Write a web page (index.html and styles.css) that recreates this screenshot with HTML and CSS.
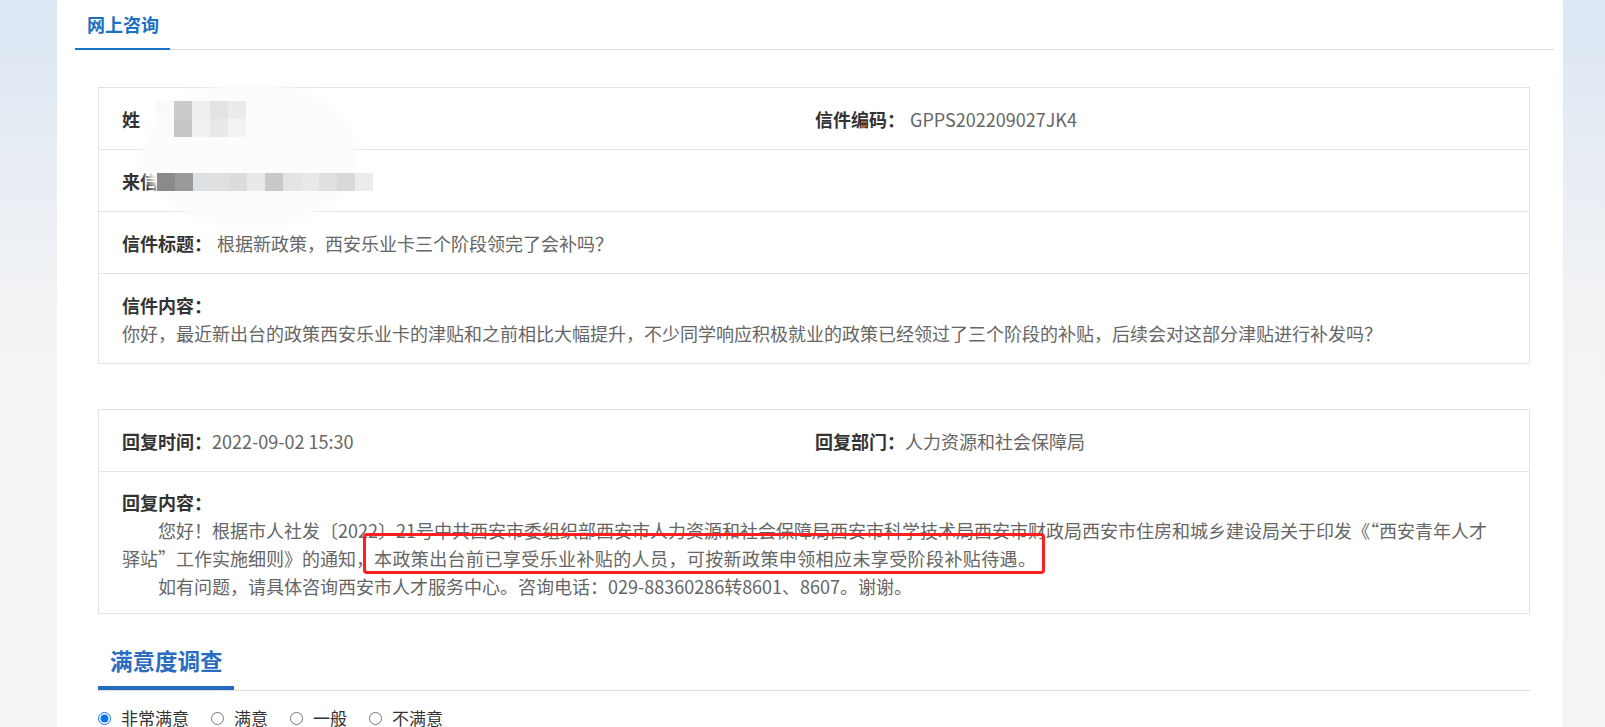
FILE: index.html
```html
<!DOCTYPE html>
<html lang="zh-CN">
<head>
    <meta charset="UTF-8">
    <title>网上咨询</title>
    <link rel="stylesheet" href="styles.css">
</head>
<body>
    <div class="page">
        <div class="tabs">
            <div class="tab">网上咨询</div>
        </div>

        <!-- 来信信息 -->
        <div class="panel letter">
            <div class="row">
                <div><span class="label">姓</span></div>
                <div><span class="label">信件编码：</span><span class="value gap">GPPS202209027JK4</span></div>
            </div>
            <div class="row">
                <div><span class="label">来信</span></div>
            </div>
            <div class="row">
                <div class="wide"><span class="label">信件标题：</span><span class="value gap">根据新政策，西安乐业卡三个阶段领完了会补吗？</span></div>
            </div>
            <div class="row tall">
                <div class="wide">
                    <div class="label">信件内容：</div>
                    <p class="value">你好，最近新出台的政策西安乐业卡的津贴和之前相比大幅提升，不少同学响应积极就业的政策已经领过了三个阶段的补贴，后续会对这部分津贴进行补发吗？</p>
                </div>
            </div>

            <!-- 打码区域 -->
            <div class="blur"></div>
            <div class="mosaic m1">
                <i class="c1"></i><i class="c2"></i><i class="c3"></i><i class="c4"></i><i class="c5"></i>
                <i class="c1b"></i><i class="c2b"></i><i class="c3b"></i><i class="c4b"></i><i class="c5b"></i>
            </div>
            <div class="mosaic m2">
                <i class="d0"></i><i class="d1"></i><i class="d2"></i><i class="d3"></i><i class="d4"></i><i class="d5"></i>
                <i class="d6"></i><i class="d7"></i><i class="d8"></i><i class="d9"></i><i class="d10"></i><i class="d11"></i>
            </div>
        </div>

        <!-- 回复信息 -->
        <div class="panel reply">
            <div class="row">
                <div><span class="label">回复时间：</span><span class="value">2022-09-02 15:30</span></div>
                <div><span class="label">回复部门：</span><span class="value">人力资源和社会保障局</span></div>
            </div>
            <div class="row tall last">
                <div class="wide">
                    <div class="label">回复内容：</div>
                    <p class="value indent">您好！根据市人社发〔2022〕21号中共西安市委组织部西安市人力资源和社会保障局西安市科学技术局西安市财政局西安市住房和城乡建设局关于印发《“西安青年人才<br>驿站”工作实施细则》的通知，<span class="mark">本政策出台前已享受乐业补贴的人员，可按新政策申领相应未享受阶段补贴待遇。</span></p>
                    <p class="value indent">如有问题，请具体咨询西安市人才服务中心。咨询电话：029-88360286转8601、8607。谢谢。</p>
                </div>
            </div>
        </div>

        <!-- 满意度调查 -->
        <div class="survey">
            <div class="survey-head">
                <h3>满意度调查</h3>
            </div>
            <div class="options">
                <label><input type="radio" name="rate" checked> 非常满意</label>
                <label><input type="radio" name="rate"> 满意</label>
                <label><input type="radio" name="rate"> 一般</label>
                <label><input type="radio" name="rate"> 不满意</label>
            </div>
        </div>
    </div>
</body>
</html>
```

FILE: styles.css
```css
html, body {
    height: 727px;
}
body {
    margin: 0;
    padding: 0;
    font-family: "Noto Sans CJK SC", "Microsoft YaHei", sans-serif;
    background: linear-gradient(180deg, #dbe7f4 0, #e9eef4 180px, #f2f3f4 320px, #f4f4f4 100%);
    overflow: hidden;
}
.page {
    margin-left: 57px;
    width: 1506px;
    height: 727px;
    background: #fff;
    padding: 0 9px 0 18px;
    box-sizing: border-box;
    overflow: hidden;
}
.tabs {
    display: flex;
    border-bottom: 1px solid #dcdcdc;
}
.tab {
    padding: 12px 11px 12px 12px;
    font-size: 18px;
    line-height: 24px;
    font-weight: bold;
    color: #1d6fc0;
    border-bottom: 2px solid #1a72c6;
    margin-bottom: -1px;
}
.panel {
    position: relative;
    margin: 37px 24px 0 23px;
    border: 1px solid #e3e3e3;
}
.panel.reply {
    margin-top: 45px;
}
.row {
    display: grid;
    grid-template-columns: 693px 1fr;
    padding: 17px 23px 16px;
    font-size: 18px;
    line-height: 28px;
}
.row + .row {
    border-top: 1px solid #e3e3e3;
}
.row.tall {
    padding-bottom: 15px;
}
.row.last {
    padding-top: 16px;
    padding-bottom: 13px;
}
.wide {
    grid-column: 1 / 3;
}
.label {
    font-weight: bold;
    color: #333;
}
.value {
    color: #666;
}
.gap {
    margin-left: 5px;
}
p {
    margin: 0;
    line-height: 29px;
}
.reply p {
    line-height: 28px;
}
.indent {
    text-indent: 2em;
}
.mark {
    border: 3px solid #ff1f1f;
    border-radius: 4px;
    padding: 9px 6px 0 8px;
    margin: 0 -9px 0 -11px;
    letter-spacing: 0.4px;
}
.blur {
    position: absolute;
    left: 44px;
    top: -6px;
    width: 214px;
    height: 146px;
    border-radius: 50%;
    background: #fcfcfc;
    filter: blur(4px);
}
.mosaic {
    position: absolute;
    display: grid;
    grid-auto-rows: 18px;
}
.mosaic i {
    display: block;
    width: 18px;
    height: 18px;
}
.m1 {
    left: 57px;
    top: 13px;
    grid-template-columns: repeat(5, 18px);
}
.c1 { background: #fafafa; }
.c2 { background: #cacaca; }
.c3 { background: #efefef; }
.c4 { background: #e3e3e3; }
.c5 { background: #ebebeb; }
.c1b { background: #fbfbfb; }
.c2b { background: #c6c6c6; }
.c3b { background: #f1f1f1; }
.c4b { background: #e9e9e9; }
.c5b { background: #f3f3f3; }
.m2 {
    left: 58px;
    top: 85px;
    grid-template-columns: repeat(12, 18px);
}
.d0 { background: #8a8a8a; }
.d1 { background: #999; }
.d2 { background: #dde0e3; }
.d3 { background: #e0e0e0; }
.d4 { background: #dcdcdc; }
.d5 { background: #e9e9e9; }
.d6 { background: #c9c9c9; }
.d7 { background: #e4e4e4; }
.d8 { background: #e9e9e9; }
.d9 { background: #dfdfdf; }
.d10 { background: #d9d9d9; }
.d11 { background: #ececec; }
.survey {
    margin: 31px 24px 0 23px;
}
.survey-head {
    border-bottom: 1px solid #dcdcdc;
}
.survey-head h3 {
    display: inline-block;
    margin: 0;
    padding: 0 11px 11px 12px;
    font-size: 22.5px;
    line-height: 30px;
    color: #2a6cbf;
    border-bottom: 4px solid #256bc0;
}
.options {
    display: flex;
    margin-top: 16px;
    font-size: 17px;
    line-height: 22px;
    color: #333;
}
.options label {
    display: flex;
    align-items: center;
    gap: 10px;
    margin-right: 22px;
}
.options input {
    margin: 0;
    width: 13px;
    height: 13px;
    accent-color: #0a75f0;
}
```
